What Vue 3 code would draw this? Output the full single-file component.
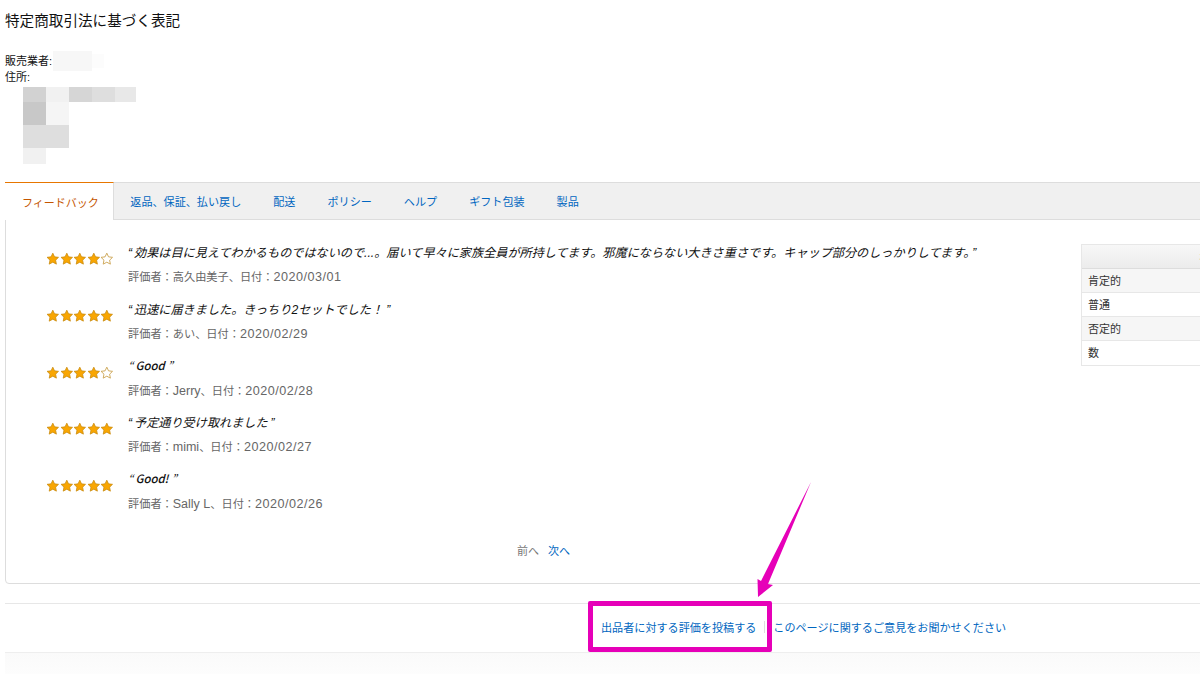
<template>
  <div class="page">
    <h1 class="title">特定商取引法に基づく表記</h1>
    <div class="seller">
      <div class="seller-row">販売業者:<span class="blur-name"></span><span class="blur-tail"></span></div>
      <div>住所:</div>
    </div>
    <div class="address-blur">
      <span v-for="(c, i) in blurCells" :key="i" :class="['cell', c]"></span>
    </div>

    <div class="box">
      <div class="tabs">
        <a
          v-for="(t, i) in tabs"
          :key="t"
          :class="['tab', { active: i === 0 }]"
        >{{ t }}</a>
      </div>
      <div class="box-body">
        <div class="reviews">
          <div v-for="r in reviews" :key="r.date" class="review">
            <div class="stars">
              <svg v-for="n in 5" :key="n" class="star" viewBox="0 0 14 14">
                <path
                  d="M7 1.2l1.8 3.8 4.1.5-3 2.9.8 4.1L7 10.5l-3.7 2 .8-4.1-3-2.9 4.1-.5z"
                  :class="n <= r.stars ? 'on' : 'off'"
                />
              </svg>
            </div>
            <div class="review-text">
              <p :class="['quote', { latin: r.latin }]"><span class="mark">“</span>{{ r.text }}<span class="mark end">”</span></p>
              <p class="meta">評価者：<span :class="{ name: r.latin || r.ascii }">{{ r.who }}</span>、日付：<span class="date">{{ r.date }}</span></p>
            </div>
          </div>
          <div class="pager">
            <span class="prev">前へ</span>
            <a class="next">次へ</a>
          </div>
        </div>
        <div class="summary">
          <div class="summary-head">30日</div>
          <div class="summary-row shade">肯定的</div>
          <div class="summary-row">普通</div>
          <div class="summary-row shade">否定的</div>
          <div class="summary-row">数</div>
        </div>
      </div>
    </div>

    <div class="footer-links">
      <a class="flink first">出品者に対する評価を投稿する</a>
      <span class="sep"></span>
      <a class="flink">このページに関するご意見をお聞かせください</a>
    </div>
    <div class="bottom-fade"></div>

    <!-- annotation drawn on top of the screenshot -->
    <div class="highlight"></div>
    <svg class="arrow" viewBox="0 0 1200 674">
      <path d="M811 482 L768 584 L773 585 L758 597 L757.5 579 L761 581 Z" fill="#e600b8" />
    </svg>
  </div>
</template>

<script setup>
const tabs = ['フィードバック', '返品、保証、払い戻し', '配送', 'ポリシー', 'ヘルプ', 'ギフト包装', '製品']

const reviews = [
  { stars: 4, text: '効果は目に見えてわかるものではないので...。届いて早々に家族全員が所持してます。邪魔にならない大きさ重さです。キャップ部分のしっかりしてます。', who: '高久由美子', date: '2020/03/01' },
  { stars: 5, text: '迅速に届きました。きっちり2セットでした！', who: 'あい', date: '2020/02/29' },
  { stars: 4, text: 'Good', who: 'Jerry', date: '2020/02/28', latin: true },
  { stars: 5, text: '予定通り受け取れました', who: 'mimi', date: '2020/02/27', ascii: true },
  { stars: 5, text: 'Good!', who: 'Sally L', date: '2020/02/26', latin: true }
]

const blurCells = [
  'd', 'l', 'd2', 'm', 'm2',
  'dd', 'xl', 'n', 'n', 'n',
  'm', 'm', 'n', 'n', 'n',
  'l', 'n', 'n', 'n', 'n'
]
</script>

<style>
html, body {
  margin: 0;
  background: #fff;
}
</style>

<style scoped>
.page {
  position: relative;
  width: 1200px;
  height: 674px;
  overflow: hidden;
  background: #fff;
  padding-top: 12px;
  box-sizing: border-box;
  font-family: "Liberation Sans", "Noto Sans CJK JP", sans-serif;
  color: #111;
}

.title {
  margin: 0 0 0 5px;
  font-size: 14.6px;
  line-height: 18px;
  font-weight: 400;
}

.seller {
  margin: 23px 0 0 5px;
  font-size: 11px;
  line-height: 16px;
}
.seller-row {
  display: flex;
  align-items: center;
}
.blur-name {
  display: block;
  width: 39px;
  height: 20px;
  margin: -2px 0 -2px 1px;
  background: #f7f7f7;
}
.blur-tail {
  display: block;
  width: 12px;
  height: 14px;
  background: #fcfcfc;
}

.address-blur {
  display: grid;
  grid-template-columns: repeat(4, 23px) 21px;
  grid-template-rows: 15px 23px 23px 16px;
  width: 113px;
  margin: 2px 0 0 23px;
}
.cell.d { background: #d2d2d2; }
.cell.d2 { background: #d6d6d6; }
.cell.dd { background: #c8c8c8; }
.cell.m { background: #dedede; }
.cell.m2 { background: #e8e8e8; }
.cell.l { background: #f1f1f1; }
.cell.xl { background: #f5f5f5; }

.box {
  width: 1300px;
  height: 402px;
  margin: 18px 0 0 5px;
  box-sizing: border-box;
  border: 1px solid #ddd;
  border-radius: 4px;
}

.tabs {
  display: flex;
  height: 37px;
  box-sizing: border-box;
  background: #f0f0f0;
  border-bottom: 1px solid #ddd;
}
.tab {
  display: flex;
  align-items: center;
  padding: 0 16px;
  font-size: 11.1px;
  color: #0066c0;
}
.tab.active {
  margin: -1px 0 -1px -1px;
  padding: 0 14.5px 0 17px;
  background: #fff;
  color: #c45500;
  font-size: 11px;
  border-top: 1px solid #e77600;
  border-right: 1px solid #ddd;
}

.box-body {
  display: flex;
  align-items: flex-start;
}

.reviews {
  width: 1075px;
  flex: none;
  padding-top: 24px;
  box-sizing: border-box;
}
.review {
  display: flex;
  align-items: flex-start;
  height: 56.75px;
  padding-left: 40px;
  box-sizing: border-box;
}
.stars {
  display: flex;
  width: 82px;
  flex: none;
  margin-top: 8px;
}
.star {
  width: 13.6px;
  height: 13.6px;
}
.star .on {
  fill: #f9a602;
  stroke: #c98a10;
  stroke-width: 0.8;
  stroke-linejoin: round;
}
.star .off {
  fill: #fff;
  stroke: #c9a04a;
  stroke-width: 0.9;
  stroke-linejoin: round;
}

.review-text p {
  margin: 0;
}
.quote {
  font-size: 12.15px;
  line-height: 18px;
  font-style: italic;
  color: #111;
}
.review-text .quote.latin {
  margin: -2px 0 8px;
  font-size: 11.4px;
  font-family: "Noto Sans CJK JP", sans-serif;
  font-weight: 500;
}
.mark {
  margin-right: 2px;
  font-weight: 400;
}
.mark.end {
  margin: 0 0 0 3px;
}
.review-text .meta {
  margin-top: 6px;
  font-size: 11.2px;
  line-height: 18px;
  color: #666;
}
.name {
  font-size: 12.5px;
}
.date {
  font-size: 12.6px;
  letter-spacing: 0.5px;
}

.pager {
  display: flex;
  justify-content: center;
  gap: 9px;
  margin-top: 15px;
  font-size: 11px;
  line-height: 16px;
}
.prev {
  color: #777;
}
.next {
  color: #0066c0;
}

.summary {
  width: 258px;
  flex: none;
  margin-top: 24px;
  border: 1px solid #e7e7e7;
  font-size: 11px;
  color: #333;
}
.summary-head {
  height: 24px;
  line-height: 24px;
  text-align: center;
  background: linear-gradient(#f7f7f7, #ececec);
  border-bottom: 1px solid #ddd;
  box-sizing: border-box;
}
.summary-row {
  height: 24px;
  line-height: 24px;
  padding-left: 6px;
  box-sizing: border-box;
  border-bottom: 1px solid #e7e7e7;
}
.summary-row:last-child {
  border-bottom: 0;
}
.summary-row.shade {
  background: #f6f6f6;
}

.footer-links {
  display: flex;
  align-items: center;
  height: 50px;
  margin: 19px 0 0 5px;
  padding: 0 0 2px 596px;
  box-sizing: border-box;
  border-top: 1px solid #e7e7e7;
  border-bottom: 1px solid #eee;
  font-size: 11.1px;
}
.flink {
  color: #0066c0;
}
.sep {
  width: 1px;
  height: 12px;
  margin: 0 8px;
  background: #ddd;
}

.bottom-fade {
  height: 22px;
  margin-left: 5px;
  background: linear-gradient(#fafafa, #fdfdfd);
}

.highlight {
  position: absolute;
  left: 588px;
  top: 601px;
  width: 184px;
  height: 51px;
  box-sizing: border-box;
  border: 5px solid #e600b8;
  border-radius: 2px;
}
.arrow {
  position: absolute;
  left: 0;
  top: 0;
  width: 1200px;
  height: 674px;
  pointer-events: none;
}
</style>
